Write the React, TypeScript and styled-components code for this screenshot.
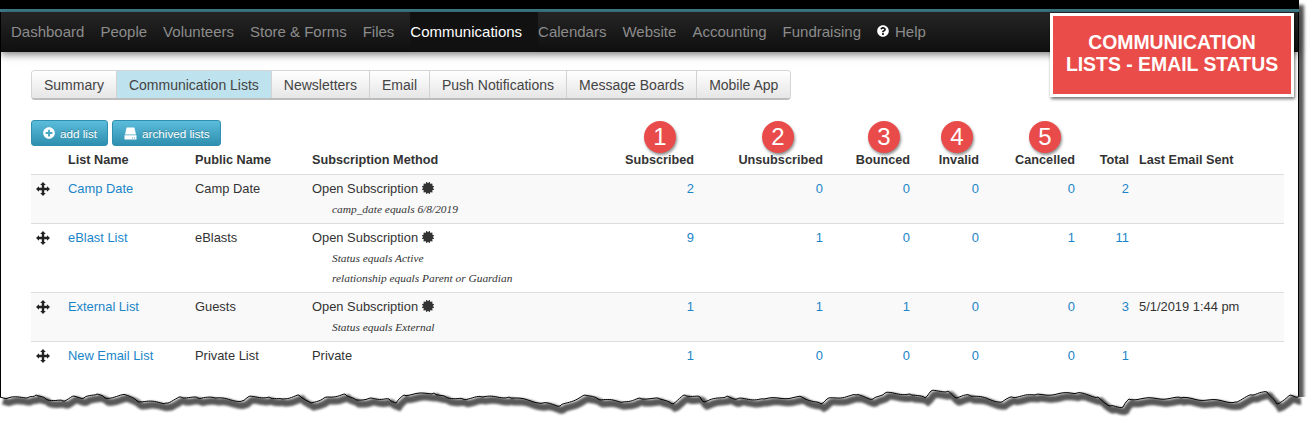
import React from 'react';
import styled, { createGlobalStyle } from 'styled-components';
import { FaCertificate, FaPlusCircle, FaQuestionCircle } from 'react-icons/fa';

const GlobalStyle = createGlobalStyle`
    html, body {
        margin: 0;
        background: #fff;
    }
    body {
        width: 1314px;
        height: 423px;
        overflow: hidden;
        font-family: "Liberation Sans", Arial, sans-serif;
        color: #333;
    }
`;

const navItems = ['Dashboard', 'People', 'Volunteers', 'Store & Forms', 'Files', 'Communications', 'Calendars', 'Website', 'Accounting', 'Fundraising'];
const tabs = ['Summary', 'Communication Lists', 'Newsletters', 'Email', 'Push Notifications', 'Message Boards', 'Mobile App'];

const markers = [
    { n: 1, x: 643 },
    { n: 2, x: 761 },
    { n: 3, x: 867 },
    { n: 4, x: 940 },
    { n: 5, x: 1028 },
];

const rows = [
    { name: 'Camp Date', pub: 'Camp Date', method: 'Open Subscription', open: true, rules: ['camp_date equals 6/8/2019'], counts: [2, 0, 0, 0, 0, 2], last: '' },
    { name: 'eBlast List', pub: 'eBlasts', method: 'Open Subscription', open: true, rules: ['Status equals Active', 'relationship equals Parent or Guardian'], counts: [9, 1, 0, 0, 1, 11], last: '' },
    { name: 'External List', pub: 'Guests', method: 'Open Subscription', open: true, rules: ['Status equals External'], counts: [1, 1, 1, 0, 0, 3], last: '5/1/2019 1:44 pm' },
    { name: 'New Email List', pub: 'Private List', method: 'Private', open: false, rules: [], counts: [1, 0, 0, 0, 0, 1], last: '' },
];

// traced from the torn paper edge, [x, y] in page pixels
const tearAnchors: [number, number][] = [
    [0, 397], [8, 398], [29, 397], [36, 395], [46, 399], [63, 401], [74, 396], [84, 398], [97, 394], [105, 398],
    [126, 395], [137, 401], [166, 403], [181, 397], [198, 398], [215, 398], [242, 401], [248, 397], [269, 397],
    [282, 399], [299, 395], [311, 403], [324, 398], [345, 394], [356, 400], [370, 398], [389, 399], [396, 403],
    [404, 395], [434, 393], [446, 397], [463, 399], [482, 397], [509, 397], [543, 403], [560, 406], [585, 395],
    [598, 399], [623, 402], [640, 398], [660, 399], [672, 404], [685, 395], [700, 397], [704, 402], [727, 396],
    [737, 399], [764, 399], [802, 397], [821, 404], [827, 399], [856, 395], [873, 399], [885, 393], [910, 394],
    [925, 398], [931, 391], [948, 391], [956, 398], [969, 395], [1002, 402], [1012, 397], [1035, 395], [1077, 393],
    [1098, 397], [1110, 406], [1123, 407], [1129, 399], [1181, 398], [1235, 402], [1252, 395], [1267, 392],
    [1277, 404], [1290, 395], [1298, 397],
];

const buildTear = () => {
    const pts: string[] = [];
    tearAnchors.forEach(([x, y], i) => {
        const next = tearAnchors[i + 1];
        if (!next) {
            pts.push(`${x},${y - 385}`);
            return;
        }
        const steps = Math.max(1, Math.round((next[0] - x) / 2));
        for (let s = 0; s < steps; s++) {
            const t = s / steps;
            const jitter = s === 0 ? 0 : Math.sin((x + s) * 12.9898) * 0.9;
            pts.push(`${(x + (next[0] - x) * t).toFixed(1)},${(y + (next[1] - y) * t + jitter - 385).toFixed(1)}`);
        }
    });
    return pts.join(' ');
};

const tearLine = buildTear();

const Sheet = styled.div`
    position: relative;
    box-sizing: border-box;
    width: 1299px;
    height: 412px;
    background: #fff;
    border-left: 1px solid #000;
    border-right: 1px solid #000;
    box-shadow: 5px 5px 3px #5a5a5a;
`;

const TopBar = styled.div`
    height: 9px;
    background: #000;
    border-bottom: 3px solid #3f7f8f;
    margin: 0 -1px 0 -1px;
`;

const Nav = styled.nav`
    display: flex;
    align-items: stretch;
    height: 40px;
    padding-left: 10px;
    background: linear-gradient(#252525, #0f0f0f);
    box-shadow: 0 2px 8px rgba(0, 0, 0, 0.55);
`;

const NavItem = styled.a<{ $active?: boolean }>`
    display: flex;
    align-items: center;
    gap: 6px;
    margin-right: ${p => (p.$active ? '0' : '16px')};
    padding: 0 ${p => (p.$active ? '16px' : '0')} 2px 0;
    font-size: 15px;
    color: ${p => (p.$active ? '#fff' : '#8c8c8c')};
    background: ${p => (p.$active ? '#111' : 'transparent')};
    white-space: nowrap;

    svg {
        color: #fff;
        font-size: 12px;
    }
`;

const Content = styled.main`
    padding: 18px 13px 0 30px;
`;

const TabBar = styled.div`
    display: inline-flex;
    height: 30px;
    box-sizing: border-box;
    border: 1px solid #d5d5d5;
    border-bottom: 2px solid #bdbdbd;
    border-radius: 4px;
    overflow: hidden;
`;

const Tab = styled.a<{ $active?: boolean }>`
    display: flex;
    align-items: center;
    padding: 0 12px;
    font-size: 14px;
    color: #444;
    background: ${p => (p.$active ? '#bfe3ee' : 'linear-gradient(#fff, #e6e6e6)')};

    & + & {
        border-left: 1px solid #d2d2d2;
    }
`;

const Toolbar = styled.div`
    display: flex;
    gap: 4px;
    margin-top: 20px;
`;

const ActionButton = styled.a`
    display: flex;
    align-items: center;
    gap: 5px;
    height: 26px;
    box-sizing: border-box;
    padding: 0 10px 0 11px;
    border: 1px solid #2f8fae;
    border-radius: 3px;
    background: linear-gradient(#5bbcdc, #2f8fae);
    color: #fff;
    font-size: 11.7px;
    text-shadow: 0 -1px 0 rgba(0, 0, 0, 0.25);

    svg {
        font-size: 12px;
    }
`;

const Table = styled.table`
    width: 1253px;
    table-layout: fixed;
    border-collapse: collapse;
    font-size: 12.9px;
    line-height: 20px;
`;

const Head = styled.th<{ $right?: boolean }>`
    padding: 4px 5px;
    text-align: ${p => (p.$right ? 'right' : 'left')};
    font-weight: bold;
    font-size: 12.7px;
    border-bottom: 1px solid #ddd;
    white-space: nowrap;
`;

const Row = styled.tr<{ $shaded?: boolean }>`
    background: ${p => (p.$shaded ? '#f9f9f9' : '#fff')};
    border-bottom: 1px solid #ddd;

    &:last-child {
        border-bottom: 0;
    }
`;

const Cell = styled.td<{ $right?: boolean }>`
    padding: 4px 5px;
    vertical-align: top;
    text-align: ${p => (p.$right ? 'right' : 'left')};
    white-space: nowrap;
`;

const MoveCell = styled(Cell)`
    padding-left: 5px;

    svg {
        display: block;
        margin-top: 3px;
    }
`;

const ListLink = styled.a`
    color: #1a85c8;
`;

const Rule = styled.div`
    padding-left: 20px;
    font-family: "Liberation Serif", Georgia, serif;
    font-style: italic;
    font-size: 11.4px;
    color: #333;
`;

const Burst = styled(FaCertificate)`
    margin-left: 4px;
    vertical-align: -1px;
    font-size: 12px;
    color: #333;
`;

const Marker = styled.div<{ $x: number }>`
    position: absolute;
    left: ${p => p.$x}px;
    top: 121px;
    width: 32px;
    height: 32px;
    border-radius: 50%;
    background: #e94b4a;
    box-shadow: 1px 2px 3px rgba(0, 0, 0, 0.45);
    color: #fff;
    font-size: 24px;
    line-height: 32px;
    text-align: center;
`;

const Callout = styled.div`
    position: absolute;
    left: 1049px;
    top: 13px;
    box-sizing: border-box;
    width: 244px;
    height: 84px;
    padding-top: 15px;
    border: 3px solid #fff;
    background: #ea4d49;
    box-shadow: 1px 2px 3px rgba(0, 0, 0, 0.55);
    color: #fff;
    font-size: 19.4px;
    font-weight: bold;
    line-height: 22px;
    text-align: center;
`;

const Tear = styled.svg`
    position: absolute;
    left: 0;
    top: 385px;
`;

const MoveIcon = () => (
    <svg width="14" height="14" viewBox="0 0 14 14" fill="#222">
        <path d="M7 0 L9.8 3 H8.2 V5.8 H11 V4.2 L14 7 L11 9.8 V8.2 H8.2 V11 H9.8 L7 14 L4.2 11 H5.8 V8.2 H3 V9.8 L0 7 L3 4.2 V5.8 H5.8 V3 H4.2 Z" />
    </svg>
);

const DriveIcon = () => (
    <svg width="13" height="13" viewBox="0 0 13 13" fill="#fff">
        <path d="M2.6 0.5 H10.4 L12 7.5 H1 Z" />
        <path d="M0.5 8.3 H12.5 V12.5 H0.5 Z M8 10.6 V11.4 H8.9 V10.6 Z M10 10.6 V11.4 H10.9 V10.6 Z" fillRule="evenodd" />
    </svg>
);

export default function App() {
    return (
        <>
            <GlobalStyle />
            <Sheet>
                <TopBar />
                <Nav>
                    {navItems.map(item => (
                        <NavItem key={item} $active={item === 'Communications'}>{item}</NavItem>
                    ))}
                    <NavItem><FaQuestionCircle />Help</NavItem>
                </Nav>
                <Content>
                    <TabBar>
                        {tabs.map(tab => (
                            <Tab key={tab} $active={tab === 'Communication Lists'}>{tab}</Tab>
                        ))}
                    </TabBar>
                    <Toolbar>
                        <ActionButton><FaPlusCircle />add list</ActionButton>
                        <ActionButton><DriveIcon />archived lists</ActionButton>
                    </Toolbar>
                    <Table>
                        <colgroup>
                            <col width={32} /><col width={127} /><col width={117} /><col width={313} />
                            <col width={79} /><col width={129} /><col width={87} /><col width={69} />
                            <col width={96} /><col width={54} /><col width={150} />
                        </colgroup>
                        <thead>
                            <tr>
                                <Head />
                                <Head>List Name</Head>
                                <Head>Public Name</Head>
                                <Head>Subscription Method</Head>
                                <Head $right>Subscribed</Head>
                                <Head $right>Unsubscribed</Head>
                                <Head $right>Bounced</Head>
                                <Head $right>Invalid</Head>
                                <Head $right>Cancelled</Head>
                                <Head $right>Total</Head>
                                <Head>Last Email Sent</Head>
                            </tr>
                        </thead>
                        <tbody>
                            {rows.map((row, i) => (
                                <Row key={row.name} $shaded={i % 2 === 0}>
                                    <MoveCell><MoveIcon /></MoveCell>
                                    <Cell><ListLink>{row.name}</ListLink></Cell>
                                    <Cell>{row.pub}</Cell>
                                    <Cell>
                                        {row.method}
                                        {row.open && <Burst />}
                                        {row.rules.map(rule => <Rule key={rule}>{rule}</Rule>)}
                                    </Cell>
                                    {row.counts.map((count, c) => (
                                        <Cell key={c} $right><ListLink>{count}</ListLink></Cell>
                                    ))}
                                    <Cell>{row.last}</Cell>
                                </Row>
                            ))}
                        </tbody>
                    </Table>
                </Content>
                {markers.map(m => <Marker key={m.n} $x={m.x}>{m.n}</Marker>)}
                <Callout>COMMUNICATION<br />LISTS - EMAIL STATUS</Callout>
            </Sheet>
            <Tear width="1314" height="38" viewBox="0 0 1314 38">
                <defs>
                    <filter id="tear-blur" x="-1%" y="-50%" width="102%" height="200%">
                        <feGaussianBlur stdDeviation="1.2" />
                    </filter>
                </defs>
                <polygon points={`${tearLine} 1314,12 1314,38 0,38`} fill="#fff" />
                <polyline points={tearLine} fill="none" stroke="#585858" strokeWidth="7" transform="translate(3 4)" filter="url(#tear-blur)" />
                <polyline points={tearLine} fill="none" stroke="#000" strokeWidth="1" />
            </Tear>
        </>
    );
}
